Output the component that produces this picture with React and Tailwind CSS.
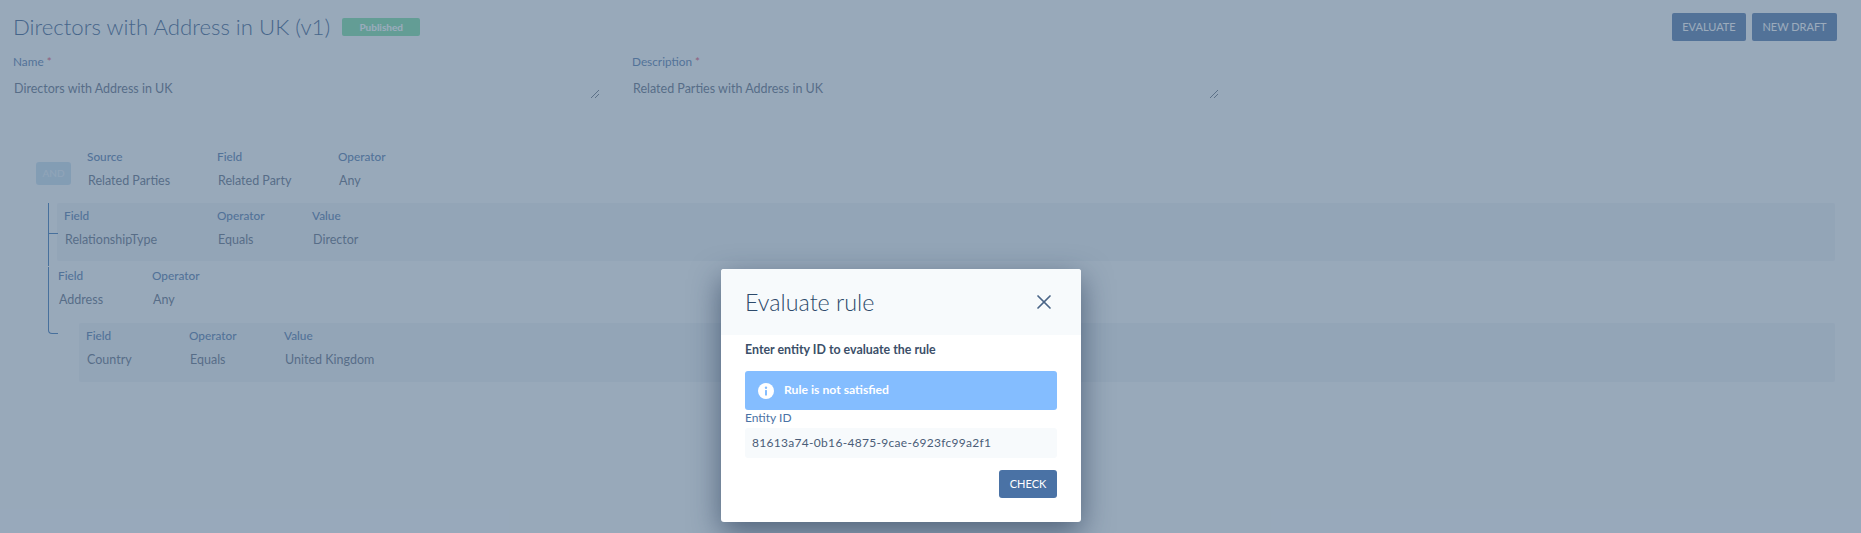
import React from 'react';
import { X } from 'lucide-react';

const Cell = ({ label, value, className }) => (
    <div className={`flex flex-col gap-[9px] shrink-0 ${className}`}>
        <span className="text-[11.8px] leading-[14px] font-medium text-[#4a72a5]">{label}</span>
        <span className="text-[12.5px] leading-[16px] pl-px text-[#56657c]">{value}</span>
    </div>
);

const TextField = ({ label, value, className }) => (
    <div className={`flex flex-col ${className}`}>
        <label className="text-[11.8px] leading-[14px] text-[#4a72a5]">{label} <span className="text-[#e53e5a]">*</span></label>
        <div className="relative h-[60px] mt-[12px] pl-px text-[12.5px] leading-[16px] text-[#56657c]">
            {value}
            <svg className="absolute right-0 top-[8px]" width="10" height="10" viewBox="0 0 10 10" fill="none" stroke="#3b4a5e" strokeWidth="0.8">
                <path d="M1 9 L9 1 M5 9 L9 5" />
            </svg>
        </div>
    </div>
);

const App = () => {
    return (
        <div className="relative w-[1861px] h-[533px] overflow-hidden bg-[#f7f9fb] font-['Lato',sans-serif]">
            <div className="px-[13px] pt-[13px]">
                <div className="flex items-start justify-between pr-[11px]">
                    <div className="flex items-center gap-[12px] h-[28px]">
                        <h1 className="font-light text-[22.2px] leading-[28px] text-[#2c5282]">Directors with Address in UK (v1)</h1>
                        <span className="flex items-center justify-center w-[78px] h-[18px] rounded-[2px] bg-[#74dc9f] text-[10px] font-bold text-white">Published</span>
                    </div>
                    <div className="flex gap-[6px]">
                        <button className="w-[74px] h-[28px] rounded-[2px] bg-[#4a72a5] text-[11px] text-white">EVALUATE</button>
                        <button className="w-[85px] h-[28px] rounded-[2px] bg-[#4a72a5] text-[11px] text-white">NEW DRAFT</button>
                    </div>
                </div>

                <div className="flex gap-[32px] mt-[14px]">
                    <TextField label="Name" value="Directors with Address in UK" className="w-[587px]" />
                    <TextField label="Description" value="Related Parties with Address in UK" className="w-[587px]" />
                </div>

                <div className="mt-[9px] ml-[23px] flex items-center">
                    <button className="w-[35px] h-[23px] mt-[8px] rounded-[3px] bg-[#c4dcec] text-[10px] text-[#e4eff6]">AND</button>
                    <div className="flex ml-[16px]">
                        <Cell label="Source" value="Related Parties" className="w-[130px]" />
                        <Cell label="Field" value="Related Party" className="w-[121px]" />
                        <Cell label="Operator" value="Any" />
                    </div>
                </div>

                <div className="relative mt-[14px] ml-[35px] pb-[3px]">
                    <div className="absolute left-0 top-0 w-[10px] h-[63px] border-l border-[#2f6bb0]" />
                    <div className="absolute left-0 top-[30px] w-[10px] border-t border-[#2f6bb0]" />
                    <div className="absolute left-0 top-[64px] w-[10px] h-[67px] border-l border-b rounded-bl-[4px] border-[#2f6bb0]" />

                    <div className="ml-[9px] mr-[-9px] w-[1778px] h-[58px] pt-[6px] pl-[7px] flex rounded-[2px] bg-[#ebeff3]">
                        <Cell label="Field" value="RelationshipType" className="w-[153px]" />
                        <Cell label="Operator" value="Equals" className="w-[95px]" />
                        <Cell label="Value" value="Director" />
                    </div>

                    <div className="flex ml-[10px] mt-[8px]">
                        <Cell label="Field" value="Address" className="w-[94px]" />
                        <Cell label="Operator" value="Any" />
                    </div>

                    <div className="ml-[31px] mt-[15px] w-[1756px] h-[59px] pt-[6px] pl-[7px] flex rounded-[2px] bg-[#ebeff3]">
                        <Cell label="Field" value="Country" className="w-[103px]" />
                        <Cell label="Operator" value="Equals" className="w-[95px]" />
                        <Cell label="Value" value="United Kingdom" />
                    </div>
                </div>
            </div>

            {/* overlay */}
            <div className="absolute inset-0 bg-[#587390]/60" />

            {/* modal */}
            <div className="absolute left-[721px] top-[269px] w-[360px] h-[253px] rounded-[3px] bg-white overflow-hidden shadow-[0_10px_30px_rgba(30,50,80,0.6)]">
                <div className="flex items-center justify-between h-[66px] pl-[24px] pr-[25px] bg-[#f7fafc]">
                    <h2 className="font-light text-[23.3px] text-[#2d4a6b]">Evaluate rule</h2>
                    <X size={24} strokeWidth={1.7} className="text-[#4a6587]" />
                </div>
                <div className="px-[24px]">
                    <p className="mt-[7px] text-[12.4px] leading-[16px] font-bold text-[#3c4f69]">Enter entity ID to evaluate the rule</p>
                    <div className="flex items-center mt-[13px] h-[39px] pl-[13px] gap-[10px] rounded-[3px] bg-[#84bdff]">
                        <svg width="16" height="16" viewBox="0 0 16 16">
                            <circle cx="8" cy="8" r="8" fill="#fff" />
                            <rect x="7" y="7" width="2" height="5.5" rx="0.5" fill="#84bdff" />
                            <circle cx="8" cy="4.8" r="1.2" fill="#84bdff" />
                        </svg>
                        <span className="text-[12.2px] font-bold text-white">Rule is not satisfied</span>
                    </div>
                    <label className="block text-[12px] leading-[15px] text-[#4a72a5]">Entity ID</label>
                    <div className="flex items-center h-[30px] mt-[3px] pl-[7px] rounded-[3px] bg-[#f7fafc] text-[12px] tracking-[0.3px] text-[#4a5d78]">81613a74-0b16-4875-9cae-6923fc99a2f1</div>
                    <div className="flex justify-end mt-[12px]">
                        <button className="w-[58px] h-[28px] rounded-[3px] bg-[#4a72a5] text-[11px] text-white">CHECK</button>
                    </div>
                </div>
            </div>
        </div>
    );
};

export default App;
